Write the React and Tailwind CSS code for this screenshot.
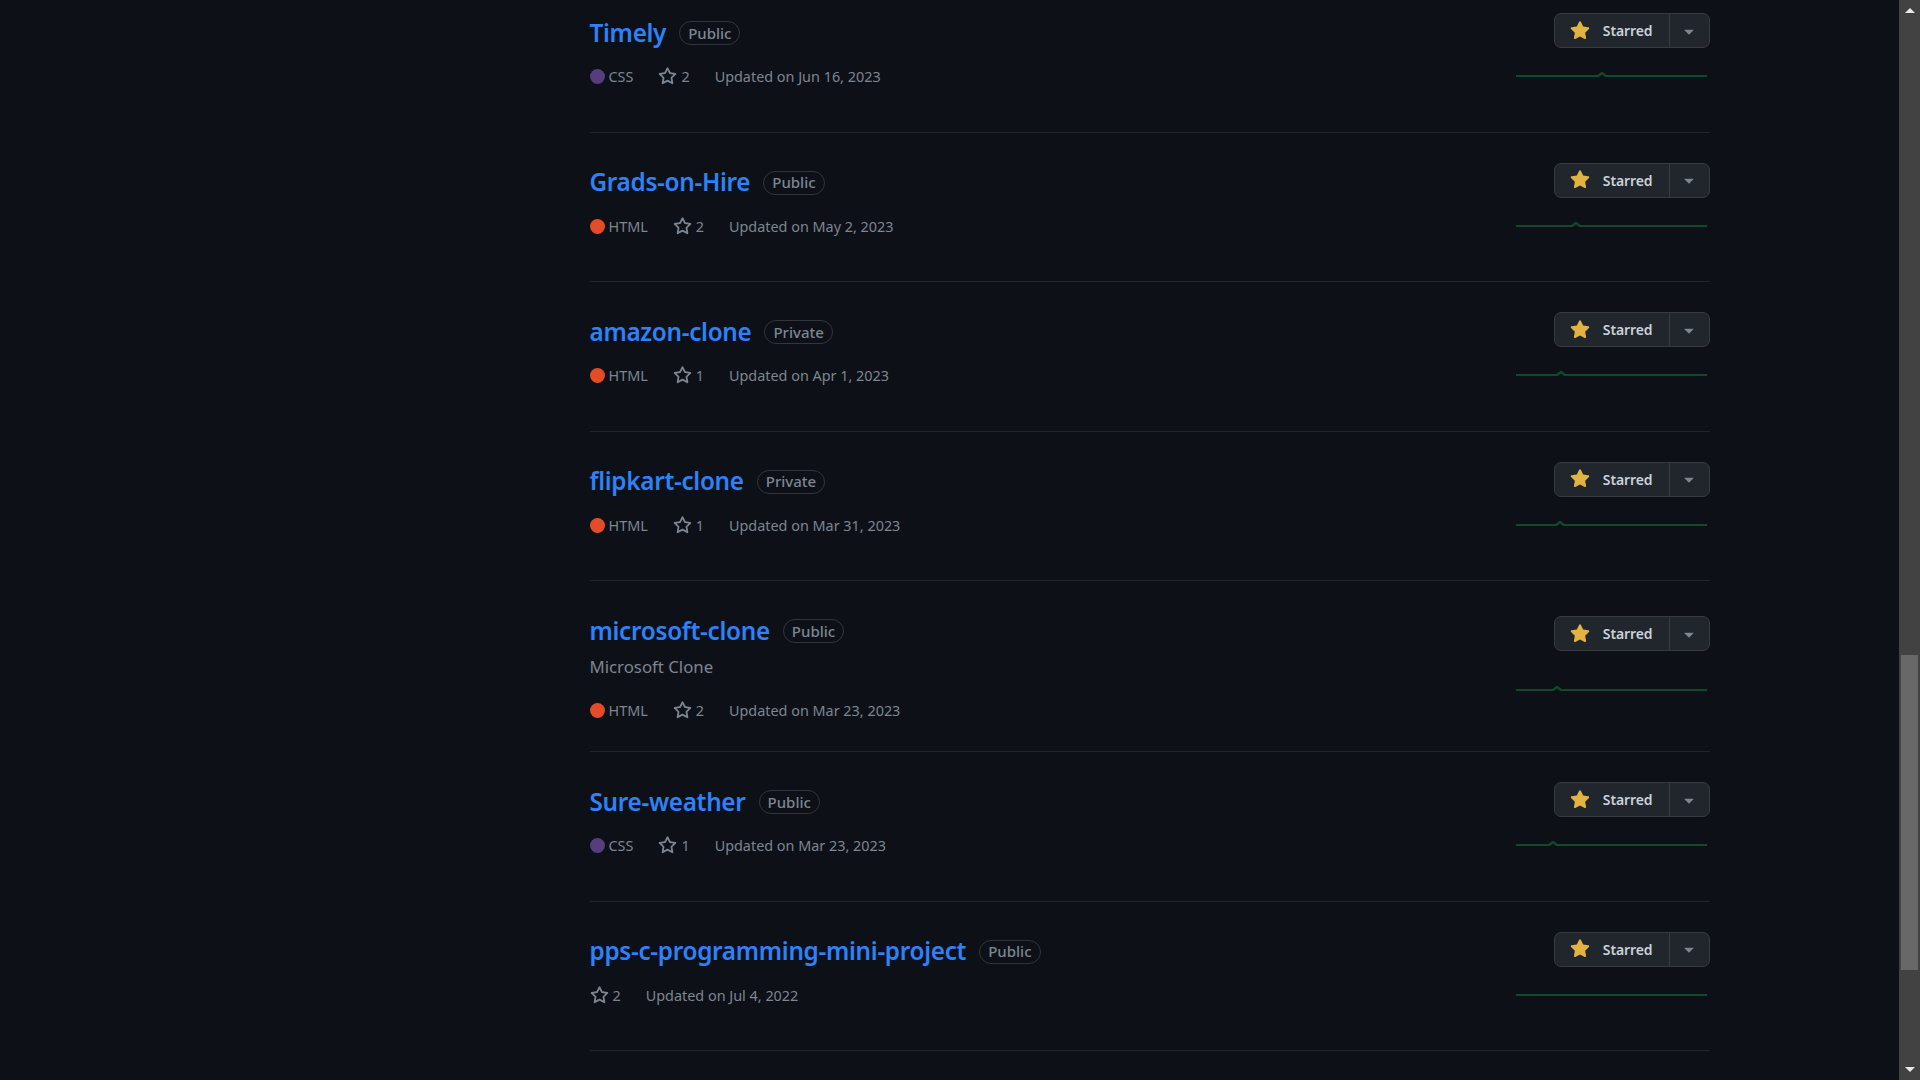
import React from "react";

const repos = [
  { name: "Timely", vis: "Public", lang: "CSS", stars: 2, updated: "Jun 16, 2023", bump: 86 },
  { name: "Grads-on-Hire", vis: "Public", lang: "HTML", stars: 2, updated: "May 2, 2023", bump: 60 },
  { name: "amazon-clone", vis: "Private", lang: "HTML", stars: 1, updated: "Apr 1, 2023", bump: 45 },
  { name: "flipkart-clone", vis: "Private", lang: "HTML", stars: 1, updated: "Mar 31, 2023", bump: 44 },
  { name: "microsoft-clone", vis: "Public", desc: "Microsoft Clone", lang: "HTML", stars: 2, updated: "Mar 23, 2023", bump: 41 },
  { name: "Sure-weather", vis: "Public", lang: "CSS", stars: 1, updated: "Mar 23, 2023", bump: 37 },
  { name: "pps-c-programming-mini-project", vis: "Public", stars: 2, updated: "Jul 4, 2022", bump: null },
];

const langColors = { CSS: "bg-[#563d7c]", HTML: "bg-[#e34c26]" };

const StarOutline = ({ className }) => (
  <svg viewBox="0 0 16 16" width="19" height="19" fill="currentColor" className={className}>
    <path d="M8 .25a.75.75 0 0 1 .673.418l1.882 3.815 4.21.612a.75.75 0 0 1 .416 1.279l-3.046 2.97.719 4.192a.751.751 0 0 1-1.088.791L8 12.347l-3.766 1.98a.75.75 0 0 1-1.088-.79l.72-4.194L.818 6.374a.75.75 0 0 1 .416-1.28l4.21-.611L7.327.668A.75.75 0 0 1 8 .25Zm0 2.445L6.615 5.5a.75.75 0 0 1-.564.41l-3.097.45 2.24 2.184a.75.75 0 0 1 .216.664l-.528 3.084 2.769-1.456a.75.75 0 0 1 .698 0l2.77 1.456-.53-3.084a.75.75 0 0 1 .216-.664l2.24-2.183-3.096-.45a.75.75 0 0 1-.564-.41L8 2.694Z" />
  </svg>
);

const StarFill = ({ className }) => (
  <svg viewBox="0 0 16 16" width="20" height="20" fill="currentColor" className={className}>
    <path d="M8 .25a.75.75 0 0 1 .673.418l1.882 3.815 4.21.612a.75.75 0 0 1 .416 1.279l-3.046 2.97.719 4.192a.751.751 0 0 1-1.088.791L8 12.347l-3.766 1.98a.75.75 0 0 1-1.088-.79l.72-4.194L.818 6.374a.75.75 0 0 1 .416-1.28l4.21-.611L7.327.668A.75.75 0 0 1 8 .25Z" />
  </svg>
);

const Caret = () => (
  <svg viewBox="0 0 16 16" width="20" height="20" fill="currentColor">
    <path d="m4.427 7.427 3.396 3.396a.25.25 0 0 0 .354 0l3.396-3.396A.25.25 0 0 0 11.396 7H4.604a.25.25 0 0 0-.177.427Z" />
  </svg>
);

// flat activity line with one tiny spike
const Sparkline = ({ bump }) => {
  const pts =
    bump == null
      ? "0,7 191,7"
      : `0,7 ${bump - 4},7 ${bump},4 ${bump + 4},7 191,7`;
  return (
    <svg width="194" height="12" viewBox="0 0 194 12" className="block">
      <polyline points={pts} fill="none" stroke="#0f4a2b" strokeWidth="2.2" strokeLinejoin="round" />
    </svg>
  );
};

const RepoRow = ({ repo }) => (
  <li className="flex border-b border-[#21262d] py-[29px]">
    {/* left side */}
    <div className="flex min-w-0 flex-1 flex-col">
      <div className="flex h-[40px] items-center pt-[2px]">
        <a className="text-[24.3px] font-semibold leading-none tracking-[-0.3px] text-[#2f81f7]">{repo.name}</a>
        <span className="ml-[13px] inline-flex h-[24px] items-center rounded-full border border-[#30363d] px-[8px] text-[15px] font-medium text-[#7d8590]">
          {repo.vis}
        </span>
      </div>
      {repo.desc && (
        <p className="mb-[7px] mt-[5px] h-[24px] text-[16.8px] leading-[24px] text-[#7d8590]">{repo.desc}</p>
      )}
      <div className="mt-[14px] flex h-[22px] items-center text-[14.4px] text-[#7d8590]">
        {repo.lang && (
          <span className="mr-[25px] flex items-center">
            <span className={`mr-[4px] h-[15px] w-[15px] rounded-full ${langColors[repo.lang]}`}></span>
            {repo.lang}
          </span>
        )}
        <span className="mr-[25px] flex items-center">
          <StarOutline className="mr-[4px]" />
          {repo.stars}
        </span>
        <span>Updated on {repo.updated}</span>
      </div>
    </div>

    {/* right side */}
    <div className="ml-[20px] flex flex-col items-end justify-around">
      <div className="mt-[1px] flex h-[35px] overflow-hidden rounded-[7px] border border-[#363b42] bg-[#21262d] text-[14px] font-semibold tracking-[-0.1px] text-[#c9d1d9]">
        <button className="flex items-center gap-[13px] border-r border-[#363b42] pl-[15px] pr-[16px]">
          <StarFill className="text-[#e3b341]" />
          Starred
        </button>
        <button className="flex w-[39px] items-center justify-center text-[#7d8590]">
          <Caret />
        </button>
      </div>
      <div className="h-[54.5px] pt-[21px]">
        <Sparkline bump={repo.bump} />
      </div>
    </div>
  </li>
);

const Scrollbar = () => (
  <div className="flex w-[21px] shrink-0 flex-col bg-[#424242]">
    <div className="flex h-[21px] items-center justify-center">
      <span className="h-0 w-0 border-x-[5px] border-b-[5px] border-x-transparent border-b-[#e8e8e8]"></span>
    </div>
    <div className="flex-1">
      <div className="mx-[2px] mt-[634px] h-[315px] bg-[#686868]"></div>
    </div>
    <div className="flex h-[21px] items-center justify-center">
      <span className="h-0 w-0 border-x-[5px] border-t-[5px] border-x-transparent border-t-[#e8e8e8]"></span>
    </div>
  </div>
);

export default function App() {
  return (
    <div
      className="flex h-screen overflow-hidden bg-[#0d1117]"
      style={{ fontFamily: '"Segoe UI", "Noto Sans", sans-serif' }}
    >
      <div className="min-w-0 flex-1 overflow-hidden">
        <div className="mx-auto flex max-w-[1600px] gap-[30px] px-[40px]">
          {/* profile sidebar, scrolled out of view */}
          <aside className="w-[370px] shrink-0"></aside>
          <main className="min-w-0 flex-1">
            <ul className="-mt-[17px]">
              {repos.map((r) => (
                <RepoRow key={r.name} repo={r} />
              ))}
            </ul>
          </main>
        </div>
      </div>
      <Scrollbar />
    </div>
  );
}
